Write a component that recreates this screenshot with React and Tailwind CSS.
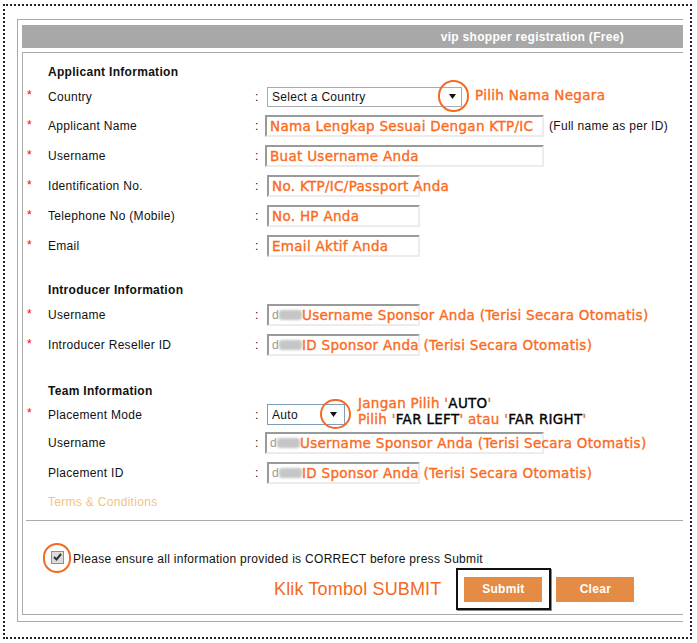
import React from "react";

// registration form screenshot with orange hand annotations

const note = "font-['DejaVu_Sans',Verdana,sans-serif] text-[13.5px] text-[#fa6a1c] [-webkit-text-stroke:0.35px_#fa6a1c] whitespace-nowrap";

function Row({ star = true, label, h = "h-[30px]", children }) {
    return (
        <div className={"flex items-center " + h}>
            <span className="w-[25px] pl-[4px] text-[#ff0000] -mt-[3px]">{star ? "*" : ""}</span>
            <span className="w-[207px]">{label}</span>
            <span className="w-[10px]">:</span>
            <div className="flex items-center">{children}</div>
        </div>
    );
}

function Heading({ children, mt }) {
    return (
        <div className={"h-[20px] flex items-center pl-[25px] font-bold " + mt}>{children}</div>
    );
}

function Input({ w = "w-[153px]", ml = "ml-[2px]", children }) {
    return (
        <div
            className={
                "h-[22px] flex items-center pl-[3px] bg-white border-2 border-t-[#9a9a9a] border-l-[#9a9a9a] border-r-[#ececec] border-b-[#ececec] whitespace-nowrap " +
                w + " " + ml
            }
        >
            {children}
        </div>
    );
}

function Blurred() {
    return (
        <span className="flex items-center w-[30px] shrink-0">
            <span className="text-[#999] text-[12px] leading-none">d</span>
            <span className="w-[23px] h-[10px] bg-[#c6c6c6] rounded-[3px] blur-[1px]"></span>
        </span>
    );
}

function Arrow() {
    return (
        <svg width="7" height="5" viewBox="0 0 7 5">
            <path d="M0 0 L7 0 L3.5 5 Z" fill="#111" />
        </svg>
    );
}

function Circle({ className }) {
    return <span className={"absolute rounded-full border-2 border-[#f26a24] " + className}></span>;
}

export default function App() {
    return (
        <div className="w-[697px] h-[643px] bg-white overflow-hidden pt-[4px] pl-[3px] font-['Liberation_Sans',Arial,sans-serif] text-[12px] tracking-[0.3px] text-[#111]">
            <div className="w-[689px] h-[635px] border-2 border-dotted border-[#222]">
                <div className="ml-[12px] mt-[13px] w-[666px] h-[603px] border-l border-t border-b border-[#aaaaaa] pl-[4px] pt-[5px]">
                    {/* header bar */}
                    <div className="h-[23px] w-[661px] bg-[#a8a8a8] flex items-center justify-end pr-[59px] text-white font-bold">
                        vip shopper registration (Free)
                    </div>

                    <div className="mt-[4px] w-[661px] h-[563px] border-l border-t border-b border-[#aaaaaa] pt-[9px]">
                        <Heading>Applicant Information</Heading>
                        <Row label="Country" h="h-[29px]">
                            <div className="relative ml-[2px] w-[195px] h-[20px] border border-[#a5acb2] bg-white flex items-center justify-between pl-[4px] pr-[5px]">
                                <span>Select a Country</span>
                                <Arrow />
                                <Circle className="left-[170px] -top-[8px] w-[31px] h-[32px]" />
                            </div>
                            <span className={note + " ml-[13px] -mt-[3px]"}>Pilih Nama Negara</span>
                        </Row>
                        <Row label="Applicant Name">
                            <Input w="w-[279px]" ml="ml-0">
                                <span className={note}>Nama Lengkap Sesuai Dengan KTP/IC</span>
                            </Input>
                            <span className="ml-[5px]">(Full name as per ID)</span>
                        </Row>
                        <Row label="Username">
                            <Input w="w-[279px]" ml="ml-0">
                                <span className={note}>Buat Username Anda</span>
                            </Input>
                        </Row>
                        <Row label="Identification No.">
                            <Input>
                                <span className={note}>No. KTP/IC/Passport Anda</span>
                            </Input>
                        </Row>
                        <Row label="Telephone No (Mobile)">
                            <Input>
                                <span className={note}>No. HP Anda</span>
                            </Input>
                        </Row>
                        <Row label="Email">
                            <Input>
                                <span className={note}>Email Aktif Anda</span>
                            </Input>
                        </Row>

                        <Heading mt="mt-[19px]">Introducer Information</Heading>
                        <Row label="Username">
                            <Input>
                                <Blurred />
                                <span className={note}>Username Sponsor Anda (Terisi Secara Otomatis)</span>
                            </Input>
                        </Row>
                        <Row label="Introducer Reseller ID">
                            <Input>
                                <Blurred />
                                <span className={note}>ID Sponsor Anda (Terisi Secara Otomatis)</span>
                            </Input>
                        </Row>

                        <Heading mt="mt-[21px]">Team Information</Heading>
                        <Row label="Placement Mode" h="h-[27px]">
                            <div className="relative ml-[2px] w-[78px] h-[21px] border border-[#7f9db9] bg-white flex items-center justify-between pl-[4px] pr-[7px]">
                                <span>Auto</span>
                                <Arrow />
                                <Circle className="left-[52px] -top-[6px] w-[31px] h-[30px]" />
                            </div>
                            <div className={note + " ml-[13px] relative -top-[4px] leading-[16px]"}>
                                <div>
                                    Jangan Pilih '<span className="text-black [-webkit-text-stroke:0.35px_#000]">AUTO</span>'
                                </div>
                                <div>
                                    Pilih '<span className="text-black [-webkit-text-stroke:0.35px_#000]">FAR LEFT</span>' atau '<span className="text-black [-webkit-text-stroke:0.35px_#000]">FAR RIGHT</span>'
                                </div>
                            </div>
                        </Row>
                        <Row star={false} label="Username">
                            <Input w="w-[279px]" ml="ml-0">
                                <Blurred />
                                <span className={note}>Username Sponsor Anda (Terisi Secara Otomatis)</span>
                            </Input>
                        </Row>
                        <Row star={false} label="Placement ID">
                            <Input>
                                <Blurred />
                                <span className={note}>ID Sponsor Anda (Terisi Secara Otomatis)</span>
                            </Input>
                        </Row>
                        <div className="h-[28px] flex items-center pl-[25px] text-[#f3c47e]">Terms &amp; Conditions</div>

                        <div className="ml-[3px] mt-[4px] h-px bg-[#aaaaaa]"></div>

                        {/* confirm */}
                        <div className="mt-[29px] ml-[28px] h-[14px] flex items-center">
                            <span className="relative w-[13px] h-[13px] border border-[#8e8f8f] bg-[#dcdcdc] flex items-center justify-center">
                                <svg width="9" height="8" viewBox="0 0 9 8">
                                    <path d="M1 4 L3.5 6.5 L8 1" stroke="#333" strokeWidth="2" fill="none" />
                                </svg>
                                <Circle className="-left-[9px] -top-[9px] w-[28px] h-[30px]" />
                            </span>
                            <span className="ml-[9px] mt-[4px]">Please ensure all information provided is CORRECT before press Submit</span>
                        </div>

                        <div className="mt-[4px] ml-[251px] flex items-center h-[42px]">
                            <span className="text-[18px] tracking-[0.15px] text-[#f26a24]">Klik Tombol SUBMIT</span>
                            <div className="relative ml-[23px]">
                                <button className="w-[78px] h-[25px] bg-[#e48c45] text-white font-bold">Submit</button>
                                <span className="absolute -left-[8px] -top-[9px] -right-[9px] -bottom-[8px] border-2 border-[#111] shadow-[1px_1px_0_#888]"></span>
                            </div>
                            <button className="ml-[14px] w-[78px] h-[25px] bg-[#e48c45] text-white font-bold">Clear</button>
                        </div>
                    </div>
                </div>
            </div>
        </div>
    );
}
